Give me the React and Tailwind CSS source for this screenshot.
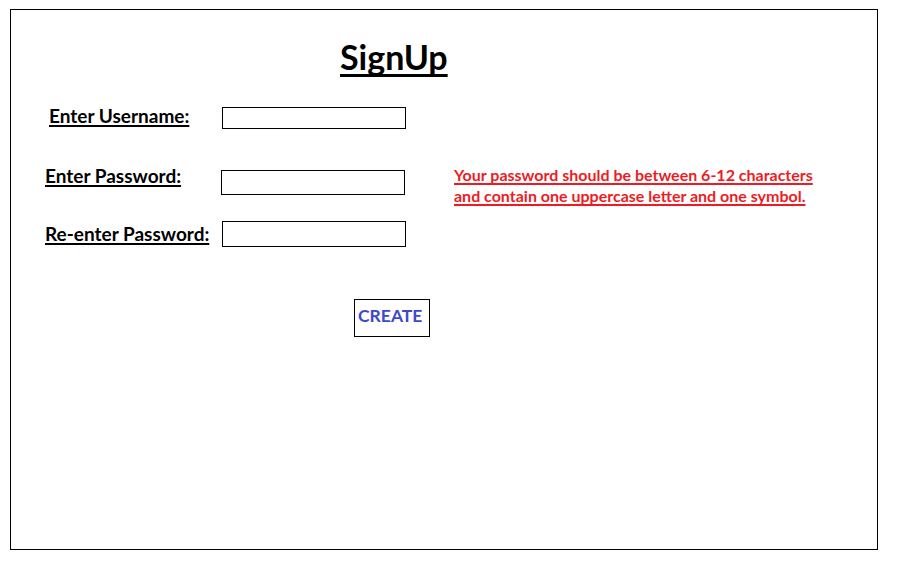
import React from "react";

const font = { fontFamily: "Lato, 'Open Sans', sans-serif" };

function Field({ label, padLeft, col, labelTop, inputTop, inputH, children }) {
  return (
    <div className="flex items-start">
      <div className={`${col} ${padLeft} shrink-0`}>
        <span
          className={`${labelTop} block text-[19px] leading-[20px] font-bold text-black underline decoration-2 underline-offset-[2px] [text-decoration-skip-ink:none]`}
        >
          {label}
        </span>
      </div>
      <input
        type="text"
        className={`${inputTop} ${inputH} w-[184px] border border-black bg-white outline-none`}
      />
      {children}
    </div>
  );
}

export default function App() {
  return (
    <div className="w-[905px] h-[576px] bg-white pt-[9px] pl-[10px]" style={font}>
      <div className="w-[868px] h-[541px] border border-black flex flex-col">
        <h1 className="mt-[27px] ml-[329px] h-[40px] text-[34px] leading-[40px] font-bold text-black underline decoration-[3px] underline-offset-[4px] [text-decoration-skip-ink:none]">
          SignUp
        </h1>

        <div className="mt-[29px]">
          <Field
            label="Enter Username:"
            padLeft="pl-[38px]"
            col="w-[211px]"
            labelTop="mt-0"
            inputTop="mt-[1px]"
            inputH="h-[22px]"
          />
        </div>

        <div className="mt-[35px]">
          <Field
            label="Enter Password:"
            padLeft="pl-[34px]"
            col="w-[210px]"
            labelTop="mt-[2px]"
            inputTop="mt-[6px]"
            inputH="h-[25px]"
          >
            <p className="ml-[49px] text-[16px] leading-[21px] font-bold text-[#ed1c24] underline decoration-2 underline-offset-[2px] [text-decoration-skip-ink:none]">
              Your password should be between 6-12 characters
              <br />
              and contain one uppercase letter and one symbol.
            </p>
          </Field>
        </div>

        <div className="mt-[15px]">
          <Field
            label="Re-enter Password:"
            padLeft="pl-[34px]"
            col="w-[211px]"
            labelTop="mt-[3px]"
            inputTop="mt-0"
            inputH="h-[26px]"
          />
        </div>

        <button
          type="button"
          className="mt-[52px] ml-[343px] w-[76px] h-[38px] border border-black bg-white pl-[3px] pb-[3px] text-left text-[17.5px] font-bold text-[#3f48cc]"
        >
          CREATE
        </button>
      </div>
    </div>
  );
}
